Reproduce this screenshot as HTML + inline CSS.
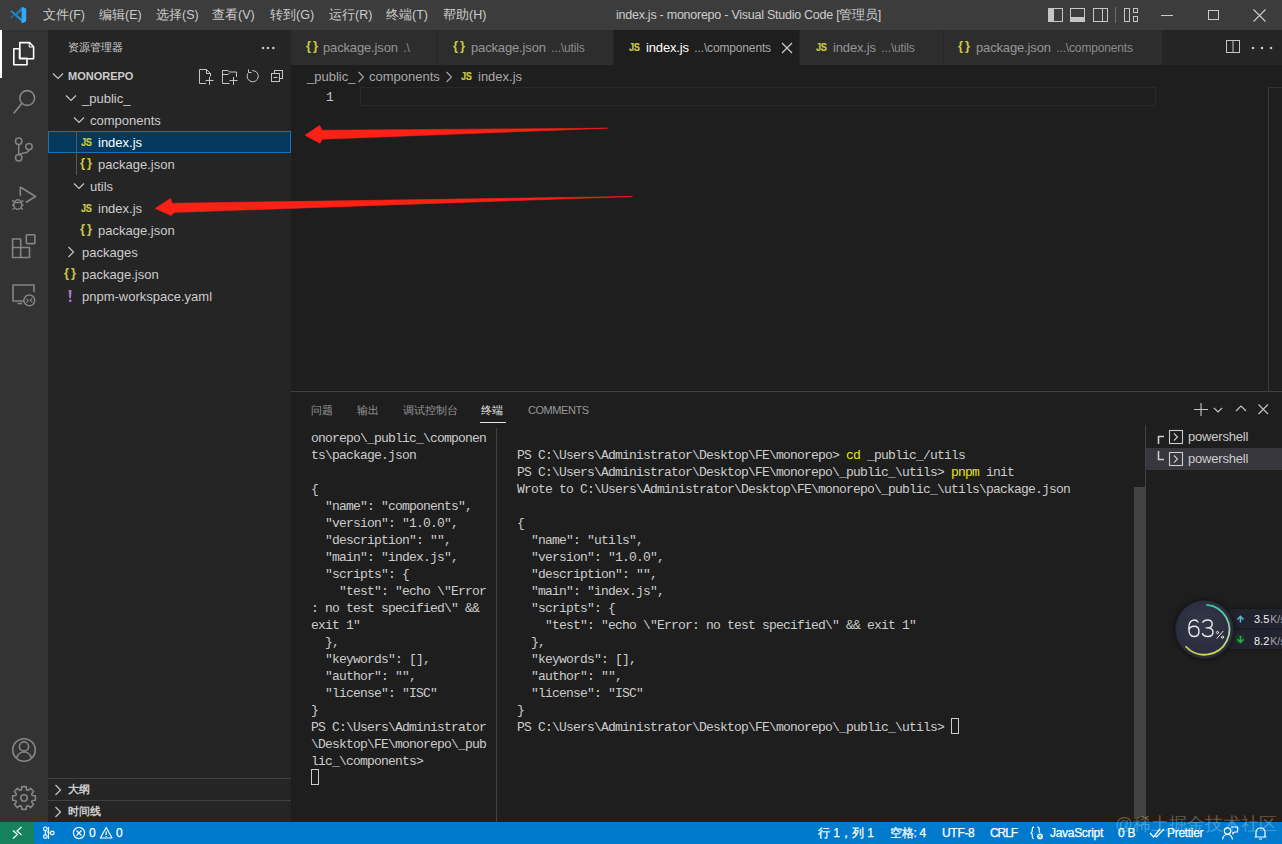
<!DOCTYPE html>
<html><head><meta charset="utf-8">
<style>
*{margin:0;padding:0;box-sizing:border-box}
html,body{width:1282px;height:844px;overflow:hidden;background:#1e1e1e;font-family:"Liberation Sans",sans-serif;color:#cccccc}
.a{position:absolute;white-space:nowrap}
#title{left:0;top:0;width:1282px;height:30px;background:#3c3c3c}
.menu{top:8px;font-size:12.5px;color:#cccccc;line-height:15px}
#act{left:0;top:30px;width:48px;height:792px;background:#333333}
#side{left:48px;top:30px;width:243px;height:792px;background:#252526}
#tabs{left:291px;top:30px;width:991px;height:35px;background:#252526}
.tab{top:30px;height:35px;background:#2d2d2d;border-right:1px solid #252526}
.tl{font-size:13px;line-height:35px;top:0;letter-spacing:-0.15px}
.row{font-size:13px;line-height:22px;height:22px;color:#cccccc}
.mono{font-family:"Liberation Mono",monospace}
#status{left:0;top:822px;width:1282px;height:22px;background:#007acc}
.st{top:822px;font-size:12px;line-height:22px;color:#ffffff;letter-spacing:-0.3px;-webkit-text-stroke:0.25px #ffffff}
.term{font-family:"Liberation Mono",monospace;font-size:13px;letter-spacing:-0.8px;line-height:17px;color:#cccccc;white-space:pre}
.js{font-size:11.5px;line-height:14px;font-weight:bold;color:#cbcb41;transform:scaleX(0.8);transform-origin:0 0;letter-spacing:-0.4px;-webkit-text-stroke:0.2px #cbcb41}
.br{font-size:13px;line-height:16px;font-weight:bold;color:#cbcb41;letter-spacing:2px}
.desc{font-size:12px;color:#8b8b8b;margin-left:2px}
.ptab{top:403px;font-size:11px;line-height:14px;color:#969696}
</style></head><body>

<div id="title" class="a">
<svg class="a" style="left:0;top:0" width="30" height="30" viewBox="0 0 30 30">
<path d="M10.2 11.2 L11.6 10.2 L22 18.8 L22 22.3 Z" fill="#1e88d0"/>
<path d="M10 17.6 L11.3 18.4 L14.2 15.8 L13 14.8 Z" fill="#1a6fae"/>
<path d="M13.5 15.2 L21.8 7.3 L22 10.8 L15 16.4 Z" fill="#1c7cc0"/>
<path d="M21.6 7.2 Q22.4 6.8 23.3 7.2 L25.6 8.3 Q26.2 8.7 26.2 9.4 V20.6 Q26.2 21.3 25.6 21.7 L23.3 22.8 Q22.4 23.2 21.6 22.8 Z" fill="#32a9f2"/>
</svg>
<div class="a menu" style="left:43px">文件(F)</div>
<div class="a menu" style="left:99px">编辑(E)</div>
<div class="a menu" style="left:156px">选择(S)</div>
<div class="a menu" style="left:212px">查看(V)</div>
<div class="a menu" style="left:270px">转到(G)</div>
<div class="a menu" style="left:329px">运行(R)</div>
<div class="a menu" style="left:386px">终端(T)</div>
<div class="a menu" style="left:443px">帮助(H)</div>
<div class="a menu" style="left:616px;letter-spacing:-0.25px">index.js - monorepo - Visual Studio Code [管理员]</div>
<svg class="a" style="left:1048px;top:8px" width="16" height="14" viewBox="0 0 16 14"><rect x="0.5" y="0.5" width="14" height="13" fill="none" stroke="#c5c5c5"/><rect x="1" y="1" width="5" height="12" fill="#c5c5c5"/></svg>
<svg class="a" style="left:1070px;top:8px" width="16" height="14" viewBox="0 0 16 14"><rect x="0.5" y="0.5" width="14" height="13" fill="none" stroke="#c5c5c5"/><rect x="1" y="9" width="13" height="4" fill="#c5c5c5"/></svg>
<svg class="a" style="left:1093px;top:8px" width="16" height="14" viewBox="0 0 16 14"><rect x="0.5" y="0.5" width="14" height="13" fill="none" stroke="#c5c5c5"/><line x1="9.5" y1="1" x2="9.5" y2="13" stroke="#c5c5c5"/></svg>
<div class="a" style="left:1115px;top:7px;width:1px;height:16px;background:#6a6a6a"></div>
<svg class="a" style="left:1124px;top:8px" width="15" height="14" viewBox="0 0 15 14"><rect x="0.5" y="0.5" width="5" height="13" fill="none" stroke="#c5c5c5"/><rect x="9.5" y="0.5" width="4" height="4" fill="none" stroke="#c5c5c5"/><rect x="9.5" y="8.5" width="4" height="5" fill="none" stroke="#c5c5c5"/></svg>
<div class="a" style="left:1161px;top:15px;width:12px;height:1px;background:#cccccc"></div>
<div class="a" style="left:1208px;top:10px;width:11px;height:10px;border:1px solid #cccccc"></div>
<svg class="a" style="left:1253px;top:9px" width="13" height="13" viewBox="0 0 13 13"><path d="M0.5 0.5 L12.5 12.5 M12.5 0.5 L0.5 12.5" stroke="#cccccc" stroke-width="1.1"/></svg>
</div>


<div id="act" class="a">
<div class="a" style="left:0;top:0;width:2px;height:48px;background:#ffffff"></div>
<svg class="a" style="left:0;top:0" width="48" height="300" viewBox="0 0 48 300" fill="none">
<!-- explorer -->
<path d="M13.8 18.7 H19.5 V28.2 H27 V34.8 H13.8 Z" stroke="#ffffff" stroke-width="1.6" stroke-linejoin="round"/>
<path d="M19.8 12.6 H29.5 L33.6 16.7 V28.8 H19.8 Z" stroke="#ffffff" stroke-width="1.6" stroke-linejoin="round"/>
<path d="M29.2 12.8 V17 H33.4" stroke="#ffffff" stroke-width="1"/>
<!-- search -->
<circle cx="27.2" cy="68" r="7.4" stroke="#858585" stroke-width="1.6"/>
<path d="M21.8 73.5 L14.2 82.8" stroke="#858585" stroke-width="1.8" stroke-linecap="round"/>
<!-- scm -->
<circle cx="18.7" cy="111.3" r="3.2" stroke="#858585" stroke-width="1.5"/>
<circle cx="29" cy="116.6" r="3.2" stroke="#858585" stroke-width="1.5"/>
<circle cx="18.7" cy="127.8" r="3.2" stroke="#858585" stroke-width="1.5"/>
<path d="M18.7 114.5 V124.6 M29 119.8 C29 123 25 123 21.5 123.5 L18.7 125" stroke="#858585" stroke-width="1.5"/>
<!-- debug -->
<path d="M20.3 157 V166 M20.3 157 L35.5 166.5 L25.8 172.5" stroke="#858585" stroke-width="1.6" stroke-linejoin="round"/>
<ellipse cx="17.8" cy="174.5" rx="4" ry="4.8" stroke="#858585" stroke-width="1.5"/>
<path d="M12 171 H14 M21.6 171 H23.5 M12 175 H14 M21.6 175 H23.5 M12.5 179.5 L14.5 178 M21 178 L23 179.5 M14 172.5 H21.6" stroke="#858585" stroke-width="1.3"/>
<!-- extensions -->
<path d="M12.6 209 H20.7 V217.5 H29.5 V227.5 H12.6 Z M12.6 217.5 H20.7 V227.5" stroke="#858585" stroke-width="1.6" stroke-linejoin="round"/>
<rect x="26.3" y="204.8" width="8.6" height="8.8" rx="0.8" stroke="#858585" stroke-width="1.6"/>
<!-- remote -->
<path d="M24 271 H13 V255 H34 V262" stroke="#858585" stroke-width="1.6" stroke-linejoin="round"/>
<path d="M17.5 273.5 H22" stroke="#858585" stroke-width="1.6"/>
<circle cx="29.3" cy="270.4" r="5.4" stroke="#858585" stroke-width="1.5"/>
<path d="M26.3 268.6 L28.3 270.6 L26.3 272.6 M32.3 268.2 L30.3 270.2 L32.3 272.2" stroke="#858585" stroke-width="1.1"/>
</svg>
<svg class="a" style="left:0;top:695px" width="48" height="97" viewBox="0 0 48 97" fill="none">
<circle cx="24" cy="25" r="11.3" stroke="#858585" stroke-width="1.6"/>
<circle cx="24" cy="21.5" r="4.6" stroke="#858585" stroke-width="1.6"/>
<path d="M16.5 33 C18 28.5 21 27 24 27 C27 27 30 28.5 31.5 33" stroke="#858585" stroke-width="1.6"/>
<g transform="translate(24 73)"><path d="M8.22 -2.54 L11.39 -2.19 L11.39 2.19 L8.22 2.54 L7.61 4.01 L9.60 6.51 L6.51 9.60 L4.01 7.61 L2.54 8.22 L2.19 11.39 L-2.19 11.39 L-2.54 8.22 L-4.01 7.61 L-6.51 9.60 L-9.60 6.51 L-7.61 4.01 L-8.22 2.54 L-11.39 2.19 L-11.39 -2.19 L-8.22 -2.54 L-7.61 -4.01 L-9.60 -6.51 L-6.51 -9.60 L-4.01 -7.61 L-2.54 -8.22 L-2.19 -11.39 L2.19 -11.39 L2.54 -8.22 L4.01 -7.61 L6.51 -9.60 L9.60 -6.51 L7.61 -4.01 Z" stroke="#858585" stroke-width="1.6" stroke-linejoin="round"/><circle r="3.2" stroke="#858585" stroke-width="1.6"/></g>
</svg>
</div>

<div id="side" class="a"><div class="a" style="left:20px;top:9px;font-size:11px;line-height:16px;color:#cccccc">资源管理器</div>
<svg class="a" style="left:212px;top:16px" width="16" height="4" viewBox="0 0 16 4"><circle cx="3" cy="2" r="1.3" fill="#c5c5c5"/><circle cx="8" cy="2" r="1.3" fill="#c5c5c5"/><circle cx="13.3" cy="2" r="1.3" fill="#c5c5c5"/></svg></div>
<div class="a" style="left:48px;top:131px;width:243px;height:22px;background:#04395e;border:1px solid #1b72b5"></div>
<div class="a" style="left:76px;top:131px;width:1px;height:44px;background:#585858"></div>
<svg class="a" style="left:52px;top:72px" width="12" height="8" viewBox="0 0 12 8"><path d="M1 1.5 L6 6.5 L11 1.5" fill="none" stroke="#c5c5c5" stroke-width="1.2"/></svg>
<div class="a" style="left:68px;top:69px;font-size:11px;line-height:14px;font-weight:bold;color:#cccccc">MONOREPO</div>
<svg class="a" style="left:65px;top:94px" width="12" height="8" viewBox="0 0 12 8"><path d="M1 1.5 L6 6.5 L11 1.5" fill="none" stroke="#c5c5c5" stroke-width="1.2"/></svg>
<div class="a row" style="left:82px;top:88px;color:#cccccc;">_public_</div>
<svg class="a" style="left:73px;top:116px" width="12" height="8" viewBox="0 0 12 8"><path d="M1 1.5 L6 6.5 L11 1.5" fill="none" stroke="#c5c5c5" stroke-width="1.2"/></svg>
<div class="a row" style="left:90px;top:110px;color:#cccccc;">components</div>
<div class="a js" style="left:81px;top:135px">JS</div>
<div class="a row" style="left:98px;top:132px;color:#ffffff;">index.js</div>
<div class="a br" style="left:80px;top:155px">{}</div>
<div class="a row" style="left:98px;top:154px;color:#cccccc;">package.json</div>
<svg class="a" style="left:73px;top:182px" width="12" height="8" viewBox="0 0 12 8"><path d="M1 1.5 L6 6.5 L11 1.5" fill="none" stroke="#c5c5c5" stroke-width="1.2"/></svg>
<div class="a row" style="left:90px;top:176px;color:#cccccc;">utils</div>
<div class="a js" style="left:81px;top:201px">JS</div>
<div class="a row" style="left:98px;top:198px;color:#cccccc;">index.js</div>
<div class="a br" style="left:80px;top:221px">{}</div>
<div class="a row" style="left:98px;top:220px;color:#cccccc;">package.json</div>
<svg class="a" style="left:67px;top:246px" width="8" height="12" viewBox="0 0 8 12"><path d="M1.5 1 L6.5 6 L1.5 11" fill="none" stroke="#c5c5c5" stroke-width="1.2"/></svg>
<div class="a row" style="left:82px;top:242px;color:#cccccc;">packages</div>
<div class="a br" style="left:64px;top:265px">{}</div>
<div class="a row" style="left:82px;top:264px;color:#cccccc;">package.json</div>
<svg class="a" style="left:67px;top:289px" width="6" height="14" viewBox="0 0 6 14"><path d="M1.6 1 H4.6 L4 9.2 H2.2 Z" fill="#a074c4"/><rect x="2" y="10.6" width="2.4" height="2.4" fill="#a074c4"/></svg>
<div class="a row" style="left:82px;top:286px;color:#cccccc;">pnpm-workspace.yaml</div>
<svg class="a" style="left:198px;top:68px" width="88" height="18" viewBox="0 0 88 18" fill="none" stroke="#c5c5c5" stroke-width="1">
<path d="M8 15.5 H1.5 V1.5 H8.5 L12.5 5.5 V8.5 M8.5 1.5 V5.5 H12.5"/>
<path d="M11.5 9 V17 M7.5 12.5 H15.5"/>
<path d="M31.5 15.5 H24.5 V2.5 H30 L31.5 4 H38.5 V9 M24.5 6.5 H30 L31.5 5"/>
<path d="M35.5 9 V17 M31.5 12.5 H39.5"/>
<path d="M54.21 2.62 A5.6 5.6 0 1 1 49.85 5.40"/>
<path d="M50.5 1.5 V4.5 H53.5"/>
<rect x="76.5" y="2.5" width="8" height="8"/>
<rect x="73.5" y="5.5" width="8" height="8" fill="#252526"/>
<path d="M75.5 9.5 H79.5"/>
</svg>
<div class="a" style="left:48px;top:778px;width:243px;height:1px;background:#414141"></div>
<svg class="a" style="left:54px;top:784px" width="8" height="12" viewBox="0 0 8 12"><path d="M1.5 1 L6.5 6 L1.5 11" fill="none" stroke="#c5c5c5" stroke-width="1.2"/></svg>
<div class="a" style="left:68px;top:782px;font-size:11px;line-height:14px;font-weight:bold;color:#cccccc">大纲</div>
<div class="a" style="left:48px;top:800px;width:243px;height:1px;background:#414141"></div>
<svg class="a" style="left:54px;top:806px" width="8" height="12" viewBox="0 0 8 12"><path d="M1.5 1 L6.5 6 L1.5 11" fill="none" stroke="#c5c5c5" stroke-width="1.2"/></svg>
<div class="a" style="left:68px;top:804px;font-size:11px;line-height:14px;font-weight:bold;color:#cccccc">时间线</div>

<div id="tabs" class="a"></div>
<div class="a tab" style="left:291px;width:147px"><div class="a br" style="left:15px;top:8px">{}</div>
<div class="a tl" style="left:32px;color:#969696">package.json <span class="desc">.\</span></div></div>
<div class="a tab" style="left:438px;width:176px"><div class="a br" style="left:15px;top:8px">{}</div>
<div class="a tl" style="left:33px;color:#969696">package.json <span class="desc">...\utils</span></div></div>
<div class="a tab" style="left:614px;width:186px;background:#1e1e1e"><div class="a js" style="left:15px;top:10px">JS</div>
<div class="a tl" style="left:32px;color:#ffffff">index.js <span class="desc" style="color:#a8a8a8">...\components</span></div>
<svg class="a" style="left:167px;top:12px" width="12" height="12" viewBox="0 0 12 12"><path d="M1 1 L11 11 M11 1 L1 11" stroke="#cccccc" stroke-width="1.2"/></svg></div>
<div class="a tab" style="left:800px;width:144px"><div class="a js" style="left:16px;top:10px">JS</div>
<div class="a tl" style="left:33px;color:#969696">index.js <span class="desc">...\utils</span></div></div>
<div class="a tab" style="left:944px;width:219px"><div class="a br" style="left:14px;top:8px">{}</div>
<div class="a tl" style="left:32px;color:#969696">package.json <span class="desc">...\components</span></div></div>
<svg class="a" style="left:1226px;top:40px" width="15" height="14" viewBox="0 0 15 14"><rect x="0.5" y="0.5" width="13" height="12" fill="none" stroke="#c5c5c5"/><line x1="7" y1="1" x2="7" y2="13" stroke="#c5c5c5"/></svg>
<svg class="a" style="left:1251px;top:46px" width="22" height="4" viewBox="0 0 22 4"><circle cx="2" cy="2" r="1.3" fill="#c5c5c5"/><circle cx="11" cy="2" r="1.3" fill="#c5c5c5"/><circle cx="20" cy="2" r="1.3" fill="#c5c5c5"/></svg>
<div class="a" style="left:307px;top:68px;font-size:13px;line-height:18px;color:#a9a9a9">_public_</div>
<svg class="a" style="left:357px;top:71px" width="8" height="12" viewBox="0 0 8 12"><path d="M1.5 1 L6.5 6 L1.5 11" fill="none" stroke="#a9a9a9" stroke-width="1.1"/></svg>
<div class="a" style="left:369px;top:68px;font-size:13px;line-height:18px;color:#a9a9a9">components</div>
<svg class="a" style="left:445px;top:71px" width="8" height="12" viewBox="0 0 8 12"><path d="M1.5 1 L6.5 6 L1.5 11" fill="none" stroke="#a9a9a9" stroke-width="1.1"/></svg>
<div class="a js" style="left:461px;top:69px">JS</div>
<div class="a" style="left:478px;top:68px;font-size:13px;line-height:18px;color:#a9a9a9">index.js</div>
<div class="a" style="left:326px;top:89px;font-size:13px;line-height:18px;color:#c6c6c6;font-family:'Liberation Mono',monospace">1</div>
<div class="a" style="left:360px;top:87px;width:796px;height:19px;border:1px solid #282828"></div>
<div class="a" style="left:1268px;top:87px;width:14px;height:304px;border-left:1px solid #3a3a3a;border-top:1px solid #333333"></div>


<div class="a" style="left:291px;top:391px;width:991px;height:1px;background:#414141"></div>
<div class="a ptab" style="left:311px">问题</div>
<div class="a ptab" style="left:357px">输出</div>
<div class="a ptab" style="left:403px">调试控制台</div>
<div class="a ptab" style="left:481px;color:#e7e7e7">终端</div>
<div class="a" style="left:480px;top:422px;width:26px;height:1px;background:#e7e7e7"></div>
<div class="a ptab" style="left:528px;letter-spacing:-0.45px">COMMENTS</div>
<svg class="a" style="left:1190px;top:400px" width="82" height="20" viewBox="0 0 82 20" fill="none" stroke="#c5c5c5" stroke-width="1.1">
<path d="M11 3 V16 M4 9.5 H18"/>
<path d="M24 8 L28 12 L32 8"/>
<path d="M46 11 L51 6 L56 11"/>
<path d="M68.5 4.5 L78 14 M78 4.5 L68.5 14"/>
</svg>
<div class="a term" style="left:311px;top:430px">onorepo\_public_\componen
ts\package.json

{
  "name": "components",
  "version": "1.0.0",
  "description": "",
  "main": "index.js",
  "scripts": {
    "test": "echo \"Error
: no test specified\" &amp;&amp;
exit 1"
  },
  "keywords": [],
  "author": "",
  "license": "ISC"
}
PS C:\Users\Administrator
\Desktop\FE\monorepo\_pub
lic_\components&gt;</div>
<div class="a" style="left:311px;top:769px;width:8px;height:16px;border:1px solid #cccccc"></div>
<div class="a" style="left:496px;top:428px;width:1px;height:394px;background:#414141"></div>
<div class="a term" style="left:517px;top:447px">PS C:\Users\Administrator\Desktop\FE\monorepo&gt; <span style="color:#e5e510">cd</span> _public_/utils
PS C:\Users\Administrator\Desktop\FE\monorepo\_public_\utils&gt; <span style="color:#e5e510">pnpm</span> init
Wrote to C:\Users\Administrator\Desktop\FE\monorepo\_public_\utils\package.json

{
  "name": "utils",
  "version": "1.0.0",
  "description": "",
  "main": "index.js",
  "scripts": {
    "test": "echo \"Error: no test specified\" &amp;&amp; exit 1"
  },
  "keywords": [],
  "author": "",
  "license": "ISC"
}
PS C:\Users\Administrator\Desktop\FE\monorepo\_public_\utils&gt; </div>
<div class="a" style="left:951px;top:718px;width:8px;height:16px;border:1px solid #cccccc"></div>
<div class="a" style="left:1134px;top:487px;width:11px;height:330px;background:#424242"></div>
<div class="a" style="left:1145px;top:425px;width:1px;height:397px;background:#414141"></div>
<div class="a" style="left:1146px;top:448px;width:136px;height:22px;background:#37373d"></div>
<svg class="a" style="left:1157px;top:435px" width="8" height="9" viewBox="0 0 8 9"><path d="M1.5 9 V1.5 H7" fill="none" stroke="#cccccc" stroke-width="1.6"/></svg>
<svg class="a" style="left:1168px;top:429px" width="16" height="16" viewBox="0 0 16 16"><rect x="1.5" y="1.5" width="13" height="13" fill="none" stroke="#cccccc" stroke-width="1.1"/><path d="M6 4.5 L9.5 8 L6 11.5" fill="none" stroke="#cccccc" stroke-width="1.1"/></svg>
<div class="a" style="left:1188px;top:428px;font-size:13px;line-height:18px;color:#cccccc;letter-spacing:-0.2px">powershell</div>
<svg class="a" style="left:1157px;top:451px" width="8" height="10" viewBox="0 0 8 10"><path d="M1.5 0 V8.5 H7" fill="none" stroke="#cccccc" stroke-width="1.6"/></svg>
<svg class="a" style="left:1168px;top:451px" width="16" height="16" viewBox="0 0 16 16"><rect x="1.5" y="1.5" width="13" height="13" fill="none" stroke="#cccccc" stroke-width="1.1"/><path d="M6 4.5 L9.5 8 L6 11.5" fill="none" stroke="#cccccc" stroke-width="1.1"/></svg>
<div class="a" style="left:1188px;top:450px;font-size:13px;line-height:18px;color:#cccccc;letter-spacing:-0.2px">powershell</div>

<div class="a" style="left:1226px;top:609px;width:60px;height:40px;background:#22232e;border-radius:5px;box-shadow:0 0 3px rgba(0,0,0,0.5)"></div>
<div class="a" style="left:1232px;top:628px;width:50px;height:2px;background:#1b1c25"></div>
<div class="a" style="left:1175.9px;top:601.2px;width:57px;height:57px;border-radius:50%;background:radial-gradient(circle at 45% 40%, #33364a 0%, #2c2e3f 60%, #262836 100%);box-shadow:0 0 0 1px #23242e, 0 0 5px 1px rgba(0,0,0,0.6)"></div>
<svg class="a" style="left:1170px;top:595px" width="70" height="70" viewBox="1170 595 70 70">
<defs><linearGradient id="g1" x1="0" y1="0" x2="0" y2="1"><stop offset="0" stop-color="#35c9a4"/><stop offset="0.5" stop-color="#9adcb0"/><stop offset="1" stop-color="#d4d84a"/></linearGradient></defs>
<path d="M1207.01 604.84 A25 25 0 1 1 1186.12 646.75" fill="none" stroke="url(#g1)" stroke-width="1.8" stroke-linecap="round"/>
</svg>
<svg class="a" style="left:1187px;top:619px" width="40" height="20" viewBox="0 0 40 20" fill="none" stroke="#ebebeb" stroke-width="1.4" stroke-linecap="round">
<path d="M11 3 C10.2 1.6 8.8 1 7.2 1 C3.6 1 1.8 4.2 1.8 9.2 C1.8 14.6 3.8 17.5 7 17.5 C10 17.5 12 15.3 12 12.2 C12 9.2 10 7.2 7.1 7.2 C4.5 7.2 2.5 8.8 1.9 11"/>
<path d="M15.8 3.2 C16.6 1.8 18.3 1 20.5 1 C23.4 1 25.2 2.7 25.2 5 C25.2 7.5 23.2 8.9 20.2 8.9 H19.3 M20.2 8.9 C23.8 8.9 26 10.5 26 13.2 C26 15.8 23.7 17.5 20.6 17.5 C18.2 17.5 16.4 16.5 15.5 14.7"/>
<g stroke-width="1"><circle cx="30.5" cy="13.5" r="1.1"/><circle cx="35.5" cy="18.2" r="1.1"/><path d="M36 12.3 L30 19.3"/></g>
</svg>

<svg class="a" style="left:1236px;top:615px" width="9" height="8" viewBox="0 0 9 8"><path d="M4.5 7.5 V1.5 M1.5 4.5 L4.5 1.3 L7.5 4.5" fill="none" stroke="#5ab4d6" stroke-width="1.6"/></svg>
<div class="a" style="left:1235px;top:634px;width:10px;height:10px;border-radius:50%;background:#173a22"></div><svg class="a" style="left:1236px;top:635px" width="9" height="9" viewBox="0 0 9 9"><path d="M4.5 1 V7.2 M1.5 4.2 L4.5 7.4 L7.5 4.2" fill="none" stroke="#2fa84a" stroke-width="1.6"/></svg>
<div class="a" style="left:1254px;top:612px;font-size:11px;line-height:14px;color:#f2f2f2;letter-spacing:0px">3.5<span style="font-size:10.5px;color:#a0a0a8;margin-left:1px">K/s</span></div>
<div class="a" style="left:1254px;top:634px;font-size:11px;line-height:14px;color:#f2f2f2;letter-spacing:0px">8.2<span style="font-size:10.5px;color:#a0a0a8;margin-left:1px">K/s</span></div>

<div id="status" class="a"></div>
<div class="a" style="left:0;top:822px;width:34px;height:22px;background:#16825d"></div>
<svg class="a" style="left:0;top:822px" width="140" height="22" viewBox="0 0 140 22" fill="none" stroke="#ffffff" stroke-width="1.2">
<path d="M13 8.5 L17.5 12.5 L13 16.5"/>
<path d="M21.5 5 L17 9 L21.5 13"/>
<circle cx="45.3" cy="6.8" r="1.8"/>
<circle cx="45.3" cy="14.6" r="1.8"/>
<circle cx="52.3" cy="11" r="1.8"/>
<path d="M45.3 8.6 V12.8 M50.5 11 C48.5 11 47.5 10.5 47 9.5 M48.5 5 V17"/>
<circle cx="79" cy="11" r="5.6"/>
<path d="M76.5 8.5 L81.5 13.5 M81.5 8.5 L76.5 13.5"/>
<path d="M106.2 5.5 L112 16 H100.4 Z" stroke-linejoin="round"/>
<path d="M106.2 9.5 V13 M106.2 14 V15"/>
</svg>
<div class="a st" style="left:89px">0</div>
<div class="a st" style="left:116px">0</div>
<div class="a st" style="left:818px;letter-spacing:0px">行 1，列 1</div>
<div class="a st" style="left:890px">空格: 4</div>
<div class="a st" style="left:942px">UTF-8</div>
<div class="a st" style="left:990px;letter-spacing:-1.1px">CRLF</div>
<svg class="a" style="left:1029px;top:826px" width="16" height="14" viewBox="0 0 16 14" fill="none" stroke="#ffffff" stroke-width="1.2">
<path d="M5 1.2 C3.2 1.2 3.3 2.6 3.3 4.5 C3.3 5.8 2.8 6.6 1.6 6.8 C2.8 7 3.3 7.8 3.3 9.1 C3.3 11 3.2 12.6 5 12.6"/>
<path d="M8.5 1.2 C10.3 1.2 10.2 2.6 10.2 4.5 C10.2 5.5 10.5 6.2 11 6.6"/>
<circle cx="11" cy="10.4" r="2.9" fill="#ffffff" stroke="none"/>
<path d="M9.8 9.2 L12.2 11.6 M12.2 9.2 L9.8 11.6" stroke="#007acc" stroke-width="1"/>
</svg>
<div class="a st" style="left:1050px">JavaScript</div>
<div class="a st" style="left:1118px">0 B</div>
<svg class="a" style="left:1149px;top:827px" width="16" height="12" viewBox="0 0 16 12" fill="none" stroke="#ffffff" stroke-width="1.2">
<path d="M1 6 L4.5 10 L11 2 M6.5 9 L7.5 10 L15 2"/>
</svg>
<div class="a st" style="left:1167px">Prettier</div>
<svg class="a" style="left:1221px;top:826px" width="18" height="14" viewBox="0 0 18 14" fill="none" stroke="#ffffff" stroke-width="1.2">
<circle cx="6.5" cy="5" r="3.2"/>
<path d="M1.5 13.5 C2 10 4 8.5 6.5 8.5 C9 8.5 11 10 11.5 13.5"/>
<path d="M10 1 H16.5 V6 H13.5 L12 7.5 V6" />
</svg>
<svg class="a" style="left:1253px;top:826px" width="15" height="15" viewBox="0 0 15 15" fill="none" stroke="#ffffff" stroke-width="1.2">
<path d="M3 11 V6.5 C3 3.5 5 2 7.5 2 C10 2 12 3.5 12 6.5 V11 H3 Z M1.5 11 H13.5 M6 13 H9"/>
</svg>
<div class="a" style="left:1115px;top:815px;font-size:17.5px;line-height:19px;color:rgba(255,255,255,0.28);letter-spacing:0px">@稀土掘金技术社区</div>


<svg class="a" style="left:0;top:0;z-index:10" width="1282" height="844" viewBox="0 0 1282 844">
<path d="M305 135.3 L319.5 125.4 L322 130.2 L607.5 128.2 L322 139.2 L320 143.3 Z" fill="#fc2116" stroke="#fc2116" stroke-width="0.6" stroke-linejoin="round"/>
<path d="M155.2 208.4 L170.4 198.5 L172 203.3 L632.5 196.5 L174 212.4 L171.2 215.6 Z" fill="#fc2116" stroke="#fc2116" stroke-width="0.6" stroke-linejoin="round"/>
</svg>
</body></html>
